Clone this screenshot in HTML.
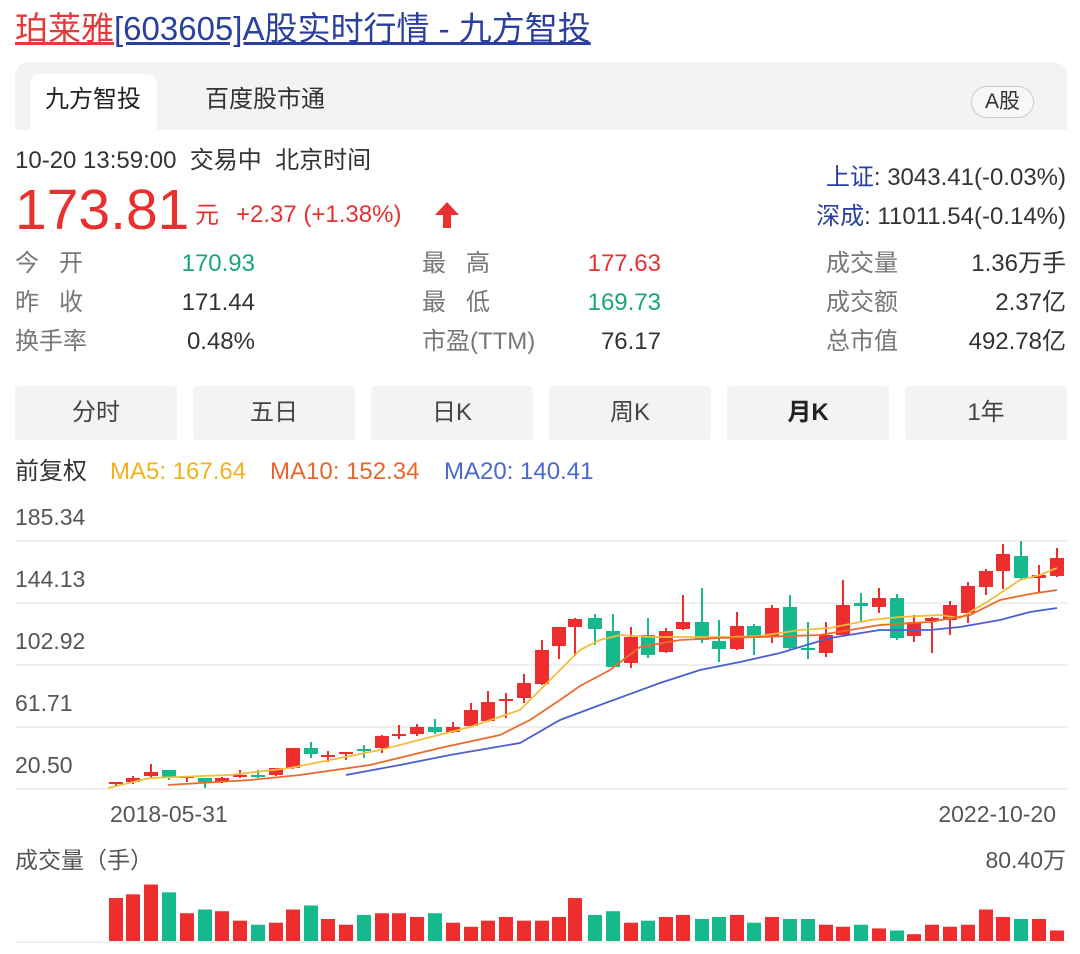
<!DOCTYPE html>
<html><head><meta charset="utf-8">
<style>
*{margin:0;padding:0;box-sizing:border-box}
body{width:1080px;height:954px;background:#fff;font-family:"Liberation Sans","Noto Sans CJK SC",sans-serif;position:relative;overflow:hidden;color:#333}
.a{position:absolute;white-space:nowrap;line-height:1}
.t{font-size:33px;top:12px;left:15px}
.t .r{color:#e23b3b;text-decoration:underline}
.t .b{color:#2a3f9f;text-decoration:underline}
.tabbar{position:absolute;left:15px;top:62px;width:1052px;height:68px;background:#f2f3f5;border-radius:14px 14px 0 0}
.tab1{position:absolute;left:30px;top:74px;width:127px;height:56px;background:#fff;border-radius:10px 10px 0 0}
.f22{font-size:24px}
.lbl{color:#777;font-size:24px}
.btn{position:absolute;top:386px;width:162px;height:54px;background:#f2f3f5;border-radius:4px;font-size:24px;text-align:center;line-height:54px;color:#444}
.ax{font-size:23px;color:#555}
</style></head><body>
<div class="a t"><span class="r">珀莱雅</span><span class="b">[603605]A股实时行情 - 九方智投</span></div>
<div class="tabbar"></div><div class="tab1"></div>
<div class="a f22" style="left:45px;top:88px;color:#222">九方智投</div>
<div class="a f22" style="left:205px;top:88px;color:#333">百度股市通</div>
<div class="a" style="left:971px;top:86px;width:63px;height:32px;border:1px solid #ccc;border-radius:16px;background:#f7f7f7;font-size:21px;text-align:center;line-height:30px;color:#333">A股</div>
<div class="a f22" style="left:15px;top:149px">10-20 13:59:00&nbsp; 交易中&nbsp; 北京时间</div>
<div class="a" style="left:15px;top:182px;font-size:57px;color:#e8302f">173.81</div>
<div class="a f22" style="left:195px;top:204px;color:#e8302f">元</div>
<div class="a f22" style="left:236px;top:203px;color:#e8302f">+2.37 (+1.38%)</div>
<svg class="a" style="left:432px;top:200px" width="30" height="30" viewBox="0 0 30 30"><path d="M15 2 L27 15 H19 V28 H11 V15 H3 Z" fill="#e8302f"/></svg>
<div class="a f22" style="right:14px;top:166px"><span style="color:#2a3f9f">上证</span>: 3043.41(-0.03%)</div>
<div class="a f22" style="right:14px;top:205px"><span style="color:#2a3f9f">深成</span>: 11011.54(-0.14%)</div>

<div class="a lbl" style="left:15px;top:252px">今&nbsp;&nbsp;&nbsp;开</div>
<div class="a f22" style="right:825px;top:252px;color:#17a77a">170.93</div>
<div class="a lbl" style="left:15px;top:291px">昨&nbsp;&nbsp;&nbsp;收</div>
<div class="a f22" style="right:825px;top:291px">171.44</div>
<div class="a lbl" style="left:15px;top:330px">换手率</div>
<div class="a f22" style="right:825px;top:330px">0.48%</div>
<div class="a lbl" style="left:422px;top:252px">最&nbsp;&nbsp;&nbsp;高</div>
<div class="a f22" style="right:419px;top:252px;color:#e8302f">177.63</div>
<div class="a lbl" style="left:422px;top:291px">最&nbsp;&nbsp;&nbsp;低</div>
<div class="a f22" style="right:419px;top:291px;color:#17a77a">169.73</div>
<div class="a lbl" style="left:422px;top:330px">市盈(TTM)</div>
<div class="a f22" style="right:419px;top:330px">76.17</div>
<div class="a lbl" style="left:826px;top:252px">成交量</div>
<div class="a f22" style="right:14px;top:252px">1.36万手</div>
<div class="a lbl" style="left:826px;top:291px">成交额</div>
<div class="a f22" style="right:14px;top:291px">2.37亿</div>
<div class="a lbl" style="left:826px;top:330px">总市值</div>
<div class="a f22" style="right:14px;top:330px">492.78亿</div>

<div class="btn" style="left:15px">分时</div>
<div class="btn" style="left:193px">五日</div>
<div class="btn" style="left:371px">日K</div>
<div class="btn" style="left:549px">周K</div>
<div class="btn" style="left:727px;font-weight:bold;color:#222">月K</div>
<div class="btn" style="left:905px">1年</div>

<div class="a f22" style="left:15px;top:460px">前复权</div>
<div class="a f22" style="left:110px;top:460px;color:#f0b21f">MA5: 167.64</div>
<div class="a f22" style="left:270px;top:460px;color:#e8662c">MA10: 152.34</div>
<div class="a f22" style="left:444px;top:460px;color:#4a68d0">MA20: 140.41</div>

<div class="a ax" style="left:15px;top:506px">185.34</div>
<div class="a ax" style="left:15px;top:568px">144.13</div>
<div class="a ax" style="left:15px;top:630px">102.92</div>
<div class="a ax" style="left:15px;top:692px">61.71</div>
<div class="a ax" style="left:15px;top:754px">20.50</div>
<div class="a ax" style="left:110px;top:803px">2018-05-31</div>
<div class="a ax" style="right:24px;top:803px">2022-10-20</div>
<div class="a ax" style="left:15px;top:849px">成交量（手）</div>
<div class="a ax" style="right:14px;top:849px">80.40万</div>

<svg id="ch" class="a" style="left:0;top:0" width="1080" height="954"></svg>
<script>
var R="#ee2e2e",G="#16b98b";
var c=[[116,782,784,782,786,R],[133,778,782,776,784,R],[151,772,776,764,778,R],[169,770,777,770,780,G],[187,776,777,776,782,R],[205,778,782,778,788,G],[222,778,782,777,783,R],[240,775,777,770,778,R],[258,775,777,770,778,G],[276,768,775,768,776,R],[293,748,768,748,769,R],[311,748,754,742,758,G],[328,755,757,751,762,R],[346,752,754,752,760,R],[364,749,751,745,758,G],[382,736,748,735,753,R],[399,734,736,725,739,R],[417,727,734,724,736,R],[435,727,732,719,734,G],[453,727,732,722,733,R],[471,710,726,703,727,R],[488,702,721,691,722,R],[506,699,700,693,718,R],[524,683,698,674,703,R],[542,650,684,640,685,R],[559,627,646,627,659,R],[575,619,627,618,656,R],[595,618,629,614,645,G],[613,631,667,614,668,G],[631,637,663,627,668,R],[648,635,655,618,658,G],[666,631,652,628,653,R],[683,622,629,595,630,R],[702,622,640,588,643,G],[719,641,649,620,662,G],[737,626,649,612,650,R],[754,626,638,624,655,G],[772,608,637,605,643,R],[790,607,648,595,650,G],[808,648,650,622,659,G],[826,635,653,622,657,R],[843,605,635,580,636,R],[861,603,606,593,623,G],[879,598,607,588,613,R],[897,598,638,594,640,G],[914,622,636,615,642,R],[932,618,621,617,653,R],[950,605,620,601,635,R],[968,586,613,582,623,R],[986,571,587,569,595,R],[1003,554,571,544,589,R],[1021,556,578,541,579,G],[1039,575,578,565,593,R],[1057,558,576,548,577,R]];
var vt=[83,72,43,66,128,117,122,150,162,156,117,105,145,162,133,128,128,139,128,156,168,150,139,150,150,139,83,133,122,156,150,139,133,145,139,133,156,139,145,145,162,168,162,173,179,190,162,168,162,117,139,145,145,179];
var s="";
[541,603,665,727,789].forEach(function(y){s+='<line x1="15" x2="1067" y1="'+y+'" y2="'+y+'" stroke="#ececec" stroke-width="1.5"/>';});
s+='<line x1="15" x2="1067" y1="942" y2="942" stroke="#ececec" stroke-width="1.5"/>';
c.forEach(function(k){var x=k[0];s+='<line x1="'+x+'" x2="'+x+'" y1="'+k[3]+'" y2="'+k[4]+'" stroke="'+k[5]+'" stroke-width="2"/>';s+='<rect x="'+(x-7)+'" y="'+k[1]+'" width="14" height="'+Math.max(2,k[2]-k[1])+'" fill="'+k[5]+'"/>';});
function pl(p,col){s+='<polyline fill="none" stroke="'+col+'" stroke-width="1.8" points="'+p.map(function(a){return a.join(",")}).join(" ")+'"/>';}
pl([[108,788],[150,778],[230,775],[290,768],[380,750],[470,727],[520,710],[560,670],[580,650],[600,640],[620,635],[650,637],[690,637],[730,637],[760,636],[800,630],[830,628],[870,620],[900,617],[940,615],[960,618],[990,600],[1020,580],[1040,575],[1057,568]],"#f3bd3a");
pl([[168,785],[250,780],[300,775],[370,765],[440,748],[500,735],[530,720],[560,700],[580,686],[610,670],[640,647],[680,640],[720,638],[760,637],[820,635],[880,625],[930,622],[970,615],[1000,600],[1030,594],[1057,590]],"#ec6a2c");
pl([[346,775],[400,765],[450,755],[520,743],[560,720],[600,705],[660,683],[700,670],[740,662],[780,653],[830,638],[880,630],[930,630],[960,627],[1000,620],[1030,612],[1057,608]],"#4c5fd0");
c.forEach(function(k,i){var t=870+vt[i]/2.96;s+='<rect x="'+(k[0]-7)+'" y="'+t+'" width="14" height="'+(941-t)+'" fill="'+k[5]+'"/>';});
document.getElementById("ch").innerHTML=s;
</script>
</body></html>
